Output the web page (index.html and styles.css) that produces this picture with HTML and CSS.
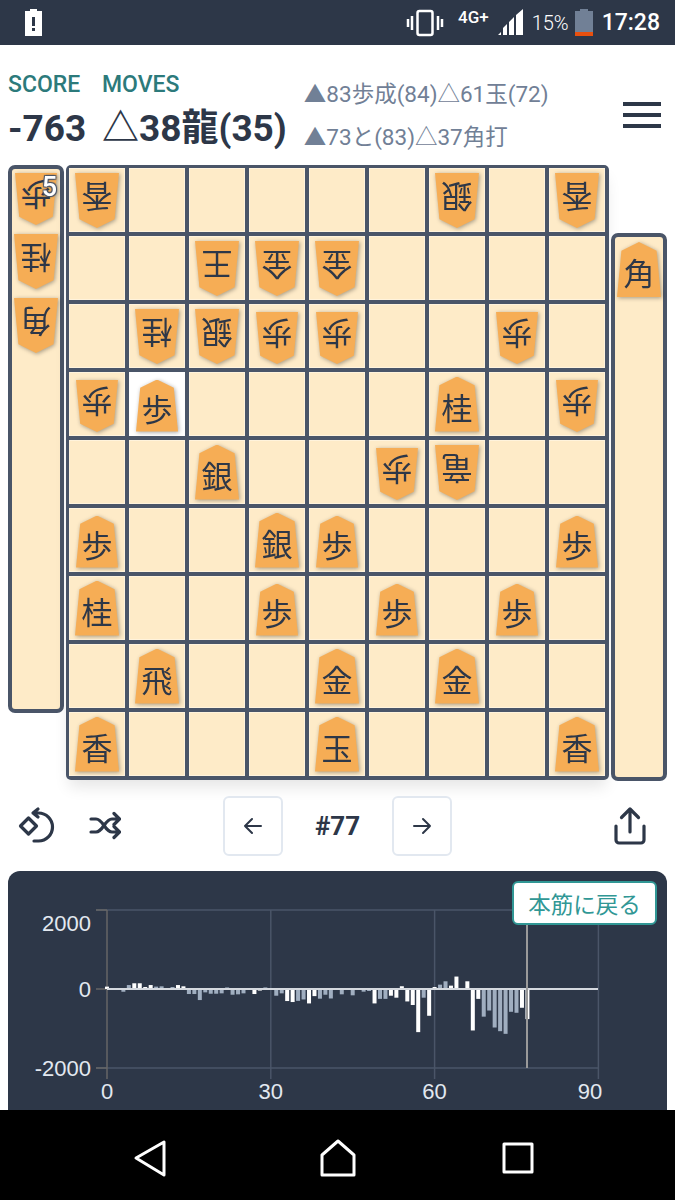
FILE: index.html
```html
<!DOCTYPE html>
<html lang="ja">

<head>
    <meta charset="UTF-8">
    <meta name="viewport" content="width=device-width, initial-scale=1.0">
    <title>Shogi Review</title>
    <link rel="stylesheet" href="styles.css">
</head>

<body>
    <div class="screen">
        <div class="status-bar">
            <svg width="17" height="27" viewBox="0 0 17 27">
                <path d="M5 0h7v2h5v25H0V2h5z" fill="#fff" />
                <rect x="7" y="8" width="3" height="9" fill="#2d3748" />
                <rect x="7" y="19" width="3" height="3" fill="#2d3748" />
            </svg>
            <div class="status-right">
                <svg width="38" height="28" viewBox="0 0 38 28">
                    <rect x="11.500" y="2" width="15" height="24" rx="2" fill="none" stroke="#fff" stroke-width="2.5" />
                    <path d="M2 10v8M6 7v14M32 7v14M36 10v8" stroke="#fff" stroke-width="2.5" fill="none" />
                </svg>
                <span class="status-net">4G+</span>
                <svg width="28" height="27" viewBox="0 0 28 27">
                    <path d="M1 26l3-3v3zM6 26v-7l4-4v11zM12 26V13l5-5v18zM19 26V6l7-6v26z" fill="#fff" />
                </svg>
                <span class="status-pct">15%</span>
                <svg width="18" height="27" viewBox="0 0 18 27">
                    <path d="M5 0h8v2h5v25H0V2h5z" fill="#718096" />
                    <rect y="23" width="18" height="4" fill="#e8500f" />
                </svg>
                <span class="status-time">17:28</span>
            </div>
        </div>

        <header class="header">
            <div class="score-grid">
                <span class="label">SCORE</span>
                <span class="label">MOVES</span>
                <span class="value">-763</span>
                <span class="value">△38龍(35)</span>
            </div>
            <div class="next-moves">
                <div>▲83歩成(84)△61玉(72)</div>
                <div>▲73と(83)△37角打</div>
            </div>
            <div class="menu">
                <span></span>
                <span></span>
                <span></span>
            </div>
        </header>

        <div class="game">
            <div class="stand stand-left">
                <div class="piece fu flip"><div class="face">歩</div><span class="count">5</span></div>
                <div class="piece flip"><div class="face">桂</div></div>
                <div class="piece flip"><div class="face">角</div></div>
            </div>

            <div class="board">
                <div class="cell"><div class="piece flip"><div class="face">香</div></div></div>
                <div class="cell"></div>
                <div class="cell"></div>
                <div class="cell"></div>
                <div class="cell"></div>
                <div class="cell"></div>
                <div class="cell"><div class="piece flip"><div class="face">銀</div></div></div>
                <div class="cell"></div>
                <div class="cell"><div class="piece flip"><div class="face">香</div></div></div>

                <div class="cell"></div>
                <div class="cell"></div>
                <div class="cell"><div class="piece flip"><div class="face">王</div></div></div>
                <div class="cell"><div class="piece flip"><div class="face">金</div></div></div>
                <div class="cell"><div class="piece flip"><div class="face">金</div></div></div>
                <div class="cell"></div>
                <div class="cell"></div>
                <div class="cell"></div>
                <div class="cell"></div>

                <div class="cell"></div>
                <div class="cell"><div class="piece flip"><div class="face">桂</div></div></div>
                <div class="cell"><div class="piece flip"><div class="face">銀</div></div></div>
                <div class="cell"><div class="piece fu flip"><div class="face">歩</div></div></div>
                <div class="cell"><div class="piece fu flip"><div class="face">歩</div></div></div>
                <div class="cell"></div>
                <div class="cell"></div>
                <div class="cell"><div class="piece fu flip"><div class="face">歩</div></div></div>
                <div class="cell"></div>

                <div class="cell"><div class="piece fu flip"><div class="face">歩</div></div></div>
                <div class="cell cell-last"><div class="piece fu"><div class="face">歩</div></div></div>
                <div class="cell"></div>
                <div class="cell"></div>
                <div class="cell"></div>
                <div class="cell"></div>
                <div class="cell"><div class="piece"><div class="face">桂</div></div></div>
                <div class="cell"></div>
                <div class="cell"><div class="piece fu flip"><div class="face">歩</div></div></div>

                <div class="cell"></div>
                <div class="cell"></div>
                <div class="cell"><div class="piece"><div class="face">銀</div></div></div>
                <div class="cell"></div>
                <div class="cell"></div>
                <div class="cell"><div class="piece fu flip"><div class="face">歩</div></div></div>
                <div class="cell"><div class="piece flip"><div class="face">竜</div></div></div>
                <div class="cell"></div>
                <div class="cell"></div>

                <div class="cell"><div class="piece fu"><div class="face">歩</div></div></div>
                <div class="cell"></div>
                <div class="cell"></div>
                <div class="cell"><div class="piece"><div class="face">銀</div></div></div>
                <div class="cell"><div class="piece fu"><div class="face">歩</div></div></div>
                <div class="cell"></div>
                <div class="cell"></div>
                <div class="cell"></div>
                <div class="cell"><div class="piece fu"><div class="face">歩</div></div></div>

                <div class="cell"><div class="piece"><div class="face">桂</div></div></div>
                <div class="cell"></div>
                <div class="cell"></div>
                <div class="cell"><div class="piece fu"><div class="face">歩</div></div></div>
                <div class="cell"></div>
                <div class="cell"><div class="piece fu"><div class="face">歩</div></div></div>
                <div class="cell"></div>
                <div class="cell"><div class="piece fu"><div class="face">歩</div></div></div>
                <div class="cell"></div>

                <div class="cell"></div>
                <div class="cell"><div class="piece"><div class="face">飛</div></div></div>
                <div class="cell"></div>
                <div class="cell"></div>
                <div class="cell"><div class="piece"><div class="face">金</div></div></div>
                <div class="cell"></div>
                <div class="cell"><div class="piece"><div class="face">金</div></div></div>
                <div class="cell"></div>
                <div class="cell"></div>

                <div class="cell"><div class="piece"><div class="face">香</div></div></div>
                <div class="cell"></div>
                <div class="cell"></div>
                <div class="cell"></div>
                <div class="cell"><div class="piece"><div class="face">玉</div></div></div>
                <div class="cell"></div>
                <div class="cell"></div>
                <div class="cell"></div>
                <div class="cell"><div class="piece"><div class="face">香</div></div></div>
            </div>

            <div class="stand stand-right">
                <div class="piece"><div class="face">角</div></div>
            </div>
        </div>

        <div class="controls">
            <div class="controls-left">
                <svg class="icon" width="40" height="40" viewBox="0 0 40 40">
                    <path d="M10.5 12l8 8-8 8-8-8z" />
                    <path d="M15 7h5.500a14 14 0 0 1 0 28H16M20 3l-5 4 5 4" />
                </svg>
                <svg class="icon" width="32" height="32" viewBox="0 0 32 32">
                    <path d="M2 9h5c7 0 9 13 16 13h7M2 22h5c7 0 9-13 16-13h7M25 3.500l5.500 5.500-5.500 5.500M25 16.500l5.500 5.500-5.500 5.500" />
                </svg>
            </div>
            <div class="pager">
                <button class="page-btn" type="button">
                    <svg class="arrow" width="24" height="24" viewBox="0 0 24 24"><path d="M20 12H4M11 5l-7 7 7 7" /></svg>
                </button>
                <span class="move-no">#77</span>
                <button class="page-btn" type="button">
                    <svg class="arrow" width="24" height="24" viewBox="0 0 24 24"><path d="M4 12h16M13 5l7 7-7 7" /></svg>
                </button>
            </div>
            <div class="controls-right">
                <svg class="icon" width="36" height="40" viewBox="0 0 36 40">
                    <path d="M18 3v23M9.500 11.500L18 3l8.500 8.500M4 20v14a3 3 0 0 0 3 3h22a3 3 0 0 0 3-3V20" />
                </svg>
            </div>
        </div>

        <div class="chart-panel">
            <svg id="chart" class="chart" width="659" height="300" viewBox="8 871 659 300">
                <path class="grid" d="M96 910H598M96 1068H598M270.800 910V1079M434.600 910V1079M598.400 910V1079" />
                <path class="axis" d="M107 910V1079M96 910H107M96 989H107M96 1068H107" />
                <g id="bars"></g>
                <path class="zero" d="M107 989H598" />
                <path class="cursor" d="M527 910V1068" />
                <text class="tick" x="91" y="931" text-anchor="end">2000</text>
                <text class="tick" x="91" y="997" text-anchor="end">0</text>
                <text class="tick" x="91" y="1076" text-anchor="end">-2000</text>
                <text class="tick" x="107" y="1099" text-anchor="middle">0</text>
                <text class="tick" x="270.800" y="1099" text-anchor="middle">30</text>
                <text class="tick" x="434.600" y="1099" text-anchor="middle">60</text>
                <text class="tick" x="590" y="1099" text-anchor="middle">90</text>
            </svg>
            <button class="back-btn" type="button">本筋に戻る</button>
        </div>

        <nav class="nav-bar">
            <svg class="nav-back" width="34" height="38" viewBox="0 0 34 38"><path d="M3 19L31 3v33z" /></svg>
            <svg width="38" height="38" viewBox="0 0 38 38"><path d="M3 16L19 2l16 14v20H3z" /></svg>
            <svg width="32" height="32" viewBox="0 0 32 32"><rect x="2" y="2" width="28" height="28" /></svg>
        </nav>
    </div>

    <script src="chart.js"></script>
</body>

</html>
```

FILE: styles.css
```css
/* Screen frame */
body {
    margin: 0;
    padding: 0;
    background-color: #fff;
    color: #2d3748;
    font-family: Roboto, "Noto Sans CJK JP", sans-serif;
}

.screen {
    display: flex;
    flex-direction: column;
    width: 675px;
    height: 1200px;
    overflow: hidden;
}

/* Android status bar */
.status-bar {
    display: flex;
    flex: none;
    align-items: center;
    justify-content: space-between;
    height: 45px;
    padding: 0 15px 0 25px;
    background-color: #2d3748;
    color: #fff;
}

.status-right {
    display: flex;
    align-items: center;
}

.status-net {
    margin: -12px 8px 0 14px;
    font-size: 17px;
    font-weight: 500;
}

.status-pct {
    margin: 0 6px 0 7px;
    font-size: 20px;
    font-weight: 300;
}

.status-time {
    margin-left: 9px;
    font-size: 23px;
    font-weight: 500;
}

/* Score header */
.header {
    display: flex;
    flex: none;
    height: 120px;
    padding: 0 14px 0 8px;
    box-sizing: border-box;
}

.score-grid {
    display: grid;
    grid-template-columns: 79px auto;
    grid-template-rows: 27px 44px;
    column-gap: 15px;
    row-gap: 9px;
    padding-top: 26px;
}

.label {
    color: #2c7a7b;
    font-size: 23px;
    font-weight: 500;
}

.value {
    font-size: 37px;
    font-weight: 700;
    line-height: 44px;
    white-space: nowrap;
}

.next-moves {
    display: flex;
    flex-direction: column;
    gap: 14px;
    padding: 35px 0 0 17px;
    color: #718096;
    font-size: 22.500px;
    line-height: 29px;
    white-space: nowrap;
}

.menu {
    display: flex;
    flex-direction: column;
    gap: 7px;
    width: 38px;
    margin: 57px 0 0 auto;
}

.menu span {
    height: 4px;
    background-color: #2d3748;
}

/* Board and piece stands */
.game {
    display: flex;
    flex: none;
    gap: 2px;
    padding: 0 8px;
    height: 615px;
}

.board {
    display: grid;
    grid-template-columns: repeat(9, 56px);
    grid-template-rows: repeat(9, 64px);
    gap: 4px;
    padding: 3px 4px 4px 3px;
    background-color: #4a5568;
    border-radius: 5px;
    box-shadow: 0 10px 15px -3px rgba(0, 0, 0, 0.1);
}

.cell {
    display: flex;
    align-items: center;
    justify-content: center;
    background-color: #feebc8;
    box-shadow: inset 0 0 0 1px #fff3dc;
}

.cell-last {
    background-color: #fff;
    box-shadow: none;
}

.stand {
    display: flex;
    flex-direction: column;
    align-items: center;
    gap: 9px;
    box-sizing: border-box;
    width: 56px;
    height: 548px;
    padding-top: 4px;
    background-color: #feebc8;
    border: 4px solid #4a5568;
    border-radius: 7px;
}

.stand-right {
    margin-top: 68px;
    padding-top: 5px;
}

.piece {
    position: relative;
    flex: none;
    width: 44px;
    height: 55px;
    filter: drop-shadow(1px 1px 2px rgba(0, 0, 0, 0.35));
}

.face {
    display: flex;
    align-items: center;
    justify-content: center;
    width: 100%;
    height: 100%;
    padding-top: 4px;
    box-sizing: border-box;
    background-color: #f6ad55;
    clip-path: polygon(50% 0, 90% 16%, 100% 100%, 0 100%, 10% 16%);
    font-family: "Noto Sans CJK JP", sans-serif;
    font-size: 31px;
    line-height: 1;
}

.flip .face {
    transform: rotate(180deg);
}

.fu {
    width: 42px;
    height: 52px;
}

.cell .fu {
    margin-top: 3px;
}

.count {
    position: absolute;
    top: 1px;
    right: 0;
    color: #fff;
    font-size: 27px;
    font-weight: 500;
    line-height: 1;
    text-shadow: 1px 1px 1px #4a5568, -1px -1px 1px #4a5568, 1px -1px 1px #4a5568, -1px 1px 1px #4a5568;
}

/* Move controls */
.controls {
    display: grid;
    flex: none;
    grid-template-columns: 1fr auto 1fr;
    align-items: center;
    height: 60px;
    margin-top: 16px;
    padding: 0 18px;
}

.controls-left {
    display: flex;
    align-items: center;
    gap: 31px;
}

.controls-right {
    display: flex;
    justify-content: flex-end;
    padding-right: 9px;
}

.icon,
.arrow {
    fill: none;
    stroke: #2d3748;
    stroke-linecap: round;
    stroke-linejoin: round;
}

.icon {
    stroke-width: 3.2;
}

.arrow {
    stroke-width: 2;
}

.pager {
    display: flex;
    align-items: center;
    gap: 32px;
}

.page-btn {
    display: flex;
    align-items: center;
    justify-content: center;
    width: 60px;
    height: 60px;
    padding: 0;
    background-color: #fff;
    border: 2px solid #e2e8f0;
    border-radius: 6px;
}

.move-no {
    font-size: 26px;
    font-weight: 700;
}

/* Evaluation chart */
.chart-panel {
    position: relative;
    flex: 1;
    margin: 15px 8px 0;
    overflow: hidden;
    background-color: #2d3748;
    border-radius: 12px 12px 0 0;
}

.chart {
    display: block;
}

.grid,
.axis,
.zero,
.cursor {
    fill: none;
}

.grid {
    stroke: #4a5568;
    stroke-width: 1.500;
}

.axis {
    stroke: #666;
    stroke-width: 1.500;
}

.zero {
    stroke: #d5d9df;
    stroke-width: 2;
}

.cursor {
    stroke: #9a9a9a;
    stroke-width: 2;
}

.bar-strong {
    fill: #fff;
}

.bar-soft {
    fill: #a0aec0;
}

.tick {
    fill: #e2e8f0;
    font-family: "Liberation Sans", Arial, sans-serif;
    font-size: 22px;
}

.back-btn {
    position: absolute;
    top: 10px;
    right: 10px;
    width: 145px;
    height: 44px;
    padding: 0;
    background-color: #fff;
    border: 2px solid #319795;
    border-radius: 6px;
    color: #319795;
    font-family: "Noto Sans CJK JP", sans-serif;
    font-size: 22.500px;
}

/* Android navigation bar */
.nav-bar {
    display: flex;
    flex: none;
    align-items: center;
    gap: 145px;
    height: 90px;
    box-sizing: border-box;
    padding: 5px 0 0 133px;
    background-color: #000;
}

.nav-bar svg {
    fill: none;
    stroke: #fff;
    stroke-width: 3;
    stroke-linejoin: round;
}

.nav-back {
    margin-right: 7px;
}
```

FILE: chart.js
```js
// Score per move, with the moves drawn as bright bars
const scores = [
    60, -20, -20, -70, 100, 145, 145, 50, 100, 60,
    68, 10, 50, 100, 68, -127, -127, -280, -85, -120,
    -120, -110, 40, -145, -135, -110, -10, -127, -40, 40,
    0, -170, -110, -305, -330, -300, -265, -365, -180, -245,
    -145, -240, 0, -135, 0, -160, 0, -68, -50, -365,
    -250, -250, -170, -220, 70, -315, -405, -1092, -220, -678,
    50, 110, 195, 85, 315, 0, 195, -1050, -250, -700,
    -545, -975, -1068, -1135, -577, -602, -475, -762
];
const strong = [0, 1, 2, 5, 6, 7, 8, 13, 14, 27, 28, 33, 34, 37, 38, 49, 52, 53, 54, 55, 56, 57, 59, 60, 63, 64, 66, 67, 68, 76, 77];

const bars = document.getElementById("bars");
const pxPerMove = 5.46;
const pxPerPoint = 79 / 2000;

scores.forEach((score, i) => {
    const height = Math.abs(score) * pxPerPoint;
    const rect = document.createElementNS("http://www.w3.org/2000/svg", "rect");
    rect.setAttribute("x", 105 + i * pxPerMove);
    rect.setAttribute("y", score > 0 ? 989 - height : 989);
    rect.setAttribute("width", 4);
    rect.setAttribute("height", height);
    rect.setAttribute("class", strong.includes(i) ? "bar-strong" : "bar-soft");
    bars.appendChild(rect);
});
```
